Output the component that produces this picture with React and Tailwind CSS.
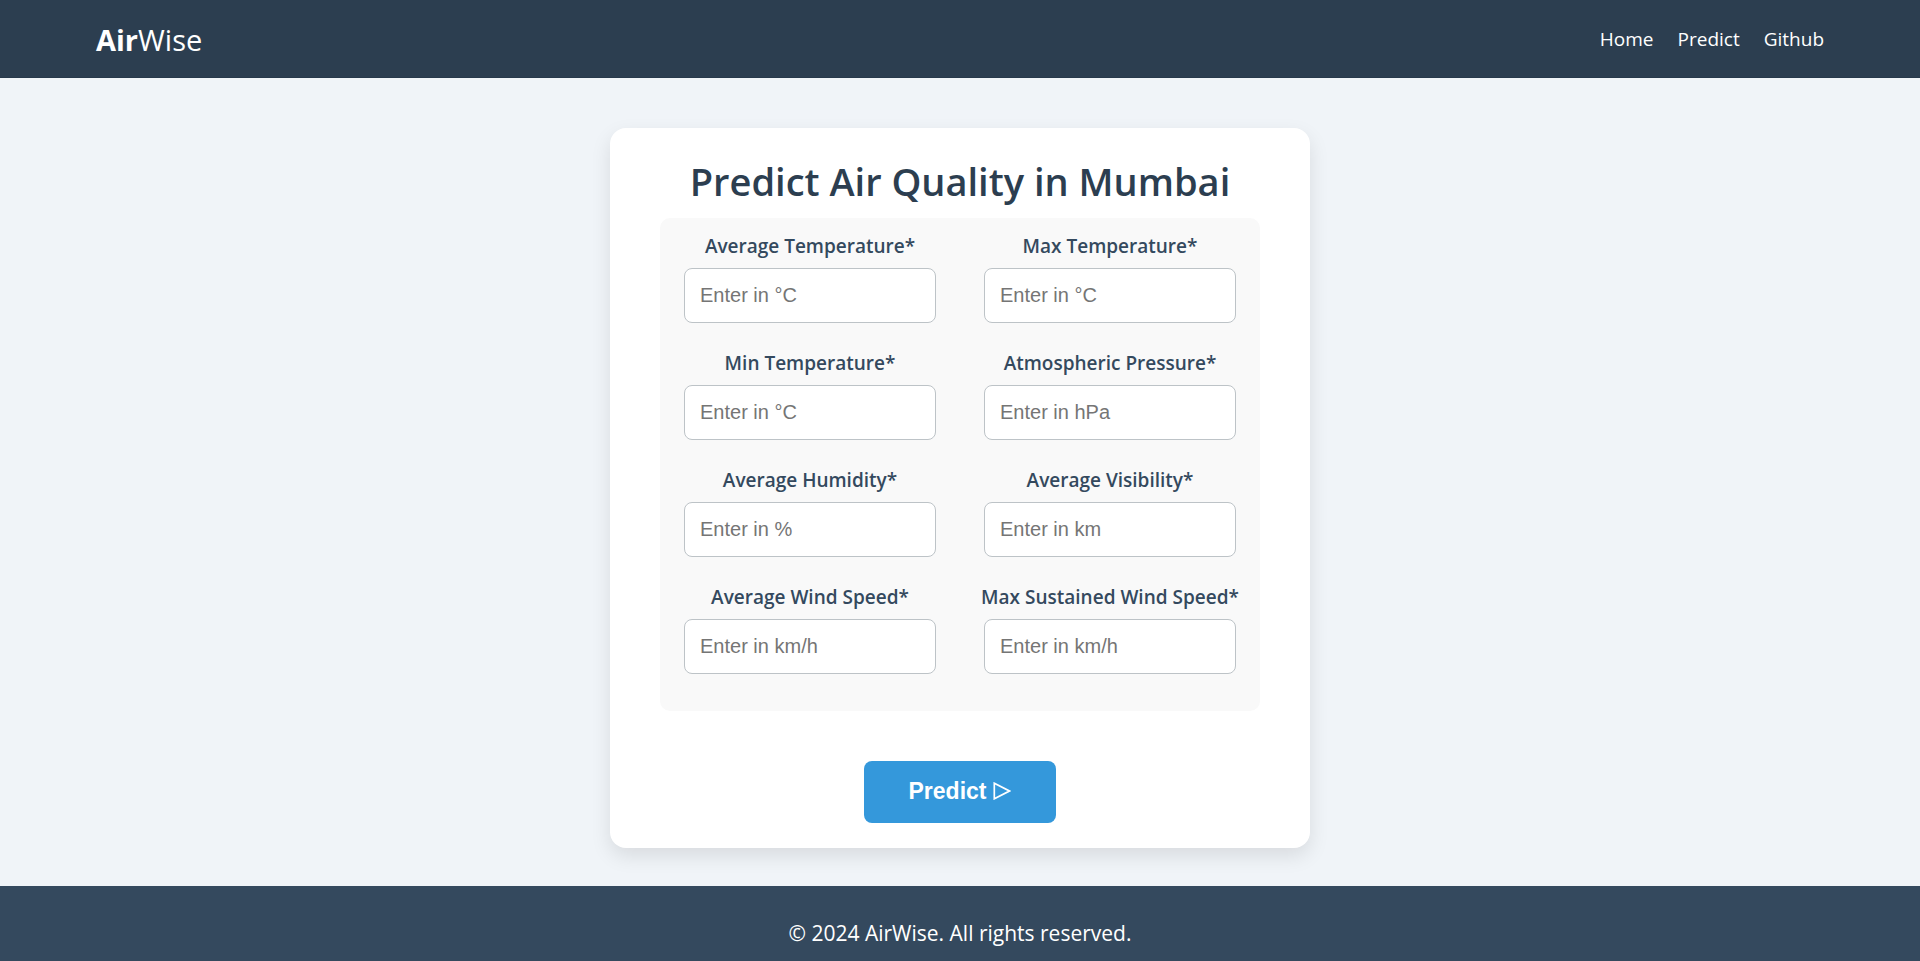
const NAV_LINKS = [
  { label: "Home", href: "#home" },
  { label: "Predict", href: "#predict" },
  { label: "Github", href: "#github" },
];

const FIELDS = [
  { id: "avg-temperature", label: "Average Temperature*", placeholder: "Enter in °C" },
  { id: "max-temperature", label: "Max Temperature*", placeholder: "Enter in °C" },
  { id: "min-temperature", label: "Min Temperature*", placeholder: "Enter in °C" },
  { id: "pressure", label: "Atmospheric Pressure*", placeholder: "Enter in hPa" },
  { id: "humidity", label: "Average Humidity*", placeholder: "Enter in %" },
  { id: "visibility", label: "Average Visibility*", placeholder: "Enter in km" },
  { id: "avg-wind", label: "Average Wind Speed*", placeholder: "Enter in km/h" },
  { id: "max-wind", label: "Max Sustained Wind Speed*", placeholder: "Enter in km/h" },
];

function Header() {
  return (
    <header className="flex items-center justify-between border-b border-[#27394b] bg-[#2c3e50] px-[5%] pt-[21px] pb-[19px] text-white">
      <a href="#home" className="text-[29px] leading-[37px]">
        <span className="font-bold">Air</span>Wise
      </a>
      <nav className="flex gap-6 text-[19px] leading-[37px]">
        {NAV_LINKS.map((link) => (
          <a key={link.label} href={link.href}>
            {link.label}
          </a>
        ))}
      </nav>
    </header>
  );
}

function Field({ id, label, placeholder }) {
  return (
    <div className="flex flex-col items-center px-6">
      <label htmlFor={id} className="mb-[10px] text-[19px] leading-6 font-semibold whitespace-nowrap text-[#34495e]">
        {label}
      </label>
      <input
        id={id}
        type="text"
        placeholder={placeholder}
        className="h-[55px] w-full rounded-lg border border-[#bdc3c7] bg-white px-[15px] font-['Liberation_Sans',sans-serif] text-[20px] text-[#34495e] placeholder:text-[#757575]"
      />
    </div>
  );
}

export default function App() {
  return (
    <div className="flex min-h-screen flex-col bg-[#f0f4f8] font-['Open_Sans',sans-serif]">
      <Header />
      <main className="flex justify-center px-6 pt-[50px] pb-[38px]">
        <form
          className="flex w-full max-w-[700px] flex-col items-center rounded-2xl bg-white px-[50px] pt-[23px] pb-[25px] shadow-[0_8px_20px_rgba(0,0,0,0.1)]"
          onSubmit={(event) => event.preventDefault()}
        >
          <h1 className="mb-[7px] text-center text-[38px] leading-[60px] font-semibold text-[#2c3e50]">
            Predict Air Quality in Mumbai
          </h1>
          <div className="grid w-full grid-cols-2 gap-y-[28px] rounded-[10px] bg-[#f9f9f9] pt-4 pb-[37px]">
            {FIELDS.map((field) => (
              <Field key={field.id} {...field} />
            ))}
          </div>
          <button
            type="submit"
            className="mt-[50px] flex h-[62px] w-48 items-center justify-center gap-[7px] rounded-lg bg-[#3498db] pb-[2px] font-['Liberation_Sans',sans-serif] text-[23px] font-bold text-white"
          >
            Predict
            <svg viewBox="0 0 18 18" className="size-[18px]" fill="none" stroke="currentColor" strokeWidth="1.7" aria-hidden="true">
              <path d="M1.3 1.2v15.6L16.4 9z" />
            </svg>
          </button>
        </form>
      </main>
      <footer className="flex-1 bg-[#34495e] px-6 pt-8 text-center text-[21px] leading-[30px] text-white">
        <p>© 2024 AirWise. All rights reserved.</p>
      </footer>
    </div>
  );
}
